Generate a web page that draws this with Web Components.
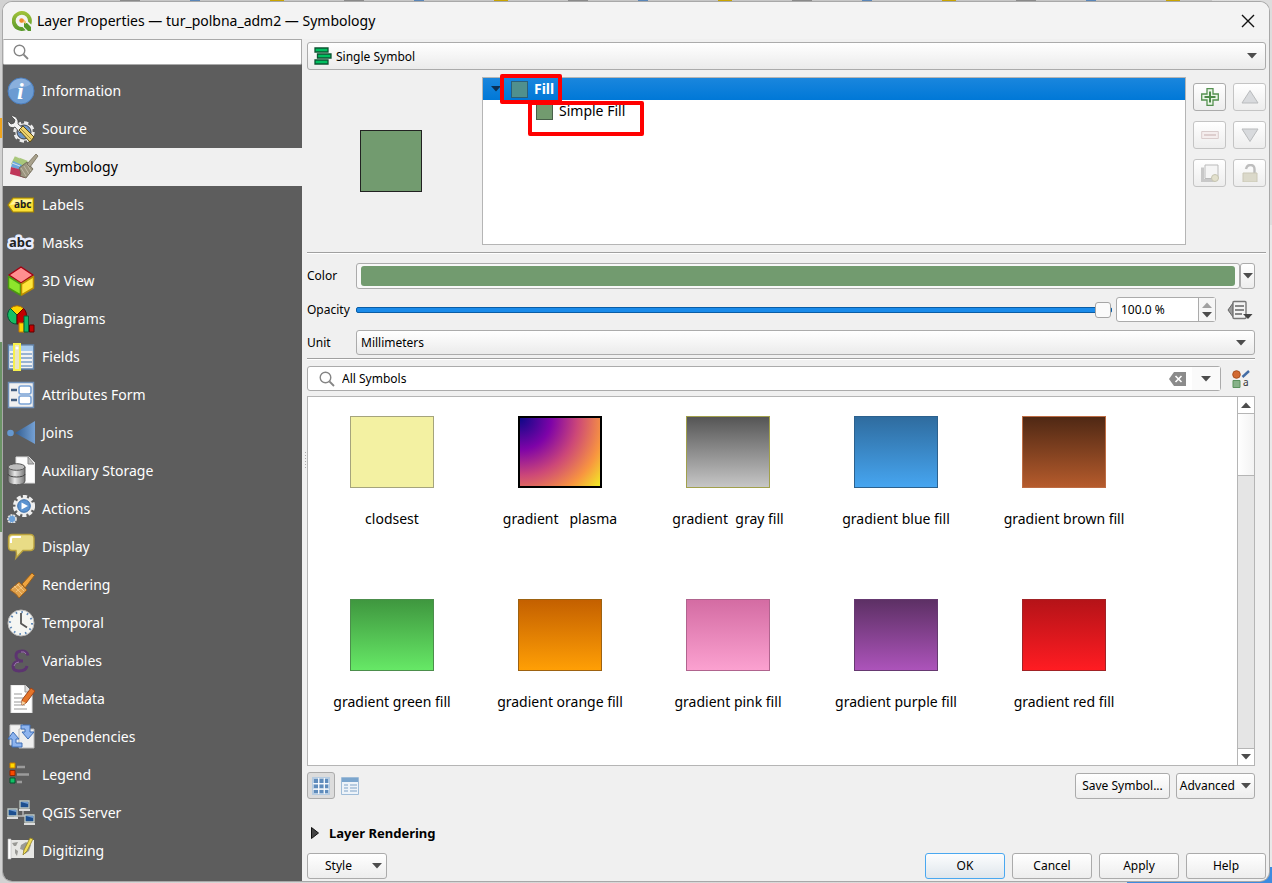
<!DOCTYPE html>
<html lang="en">
<head>
<meta charset="utf-8">
<title>Layer Properties</title>
<style>
html, body { margin: 0; }
body {
  min-height: 100vh;
  display: flex;
  box-sizing: border-box;
  padding: 2px 3px;
  background: #cfcfcf;
  font-family: "Noto Sans", "Open Sans", sans-serif;
  font-size: 14px;
  color: #000;
}
</style>
</head>
<body>
<desktop-backdrop></desktop-backdrop>
<layer-dialog></layer-dialog>

<script>
const ICONS = {
  qgis: ['0 0 20 20', '<defs><linearGradient id="q" x2="0" y2="1"><stop stop-color="#a3c33b"/><stop offset="1" stop-color="#57982a"/></linearGradient></defs><path fill="url(#q)" d="M10 0a10 10 0 1 0 3.700 19.200L10.500 16A6.200 6.200 0 1 1 16 10.400l3.200 3.200A10 10 0 0 0 10 0z"/><path fill="#57982a" d="M12 12h3l4 4v4h-3l-4-4z"/><path fill="#f6c37c" d="M8 8h3.500l2.500 2.500V13l-2.500-1.500H9z"/><circle cx="9.500" cy="9.500" r="2.200" fill="#ef8a2c"/>'],
  close: ['0 0 14 14', '<path d="M1 1l12 12M13 1L1 13" stroke="#111" stroke-width="1.400" fill="none"/>'],
  search: ['0 0 16 16', '<circle cx="6.500" cy="6.500" r="5.300" fill="none" stroke="#858585" stroke-width="1.400"/><path d="M10.500 10.500l4.500 4.500" stroke="#858585" stroke-width="1.800"/>'],
  down: ['0 0 10 6', '<path d="M0 0h10L5 5.500z" fill="#4d4d4d"/>'],
  expanded: ['0 0 10 6', '<path d="M0 0h10L5 5.500z" fill="#0b2e52"/>'],
  up: ['0 0 10 6', '<path d="M0 6h10L5 .5z" fill="#4d4d4d"/>'],
  upgrey: ['0 0 10 6', '<path d="M0 6h10L5 .5z" fill="#a0a0a0"/>'],
  right: ['0 0 8 12', '<path d="M.5 .5L7.500 6 .5 11.500z" fill="#444" stroke="#111"/>'],
  single: ['0 0 18 18', '<g fill="#00c060" stroke="#0c5432" stroke-width="1.300"><path d="M1 1h13v4H1zM3.500 7H17v4H3.500zM1 13h13v4H1z"/></g>'],
  information: ['0 0 28 28', '<circle cx="14" cy="14" r="13" fill="#6b9bd2" stroke="#4d7fbe"/><path d="M2 13a12 12 0 0 1 22-6C18 12 11 9 2 13z" fill="#a9c6e8" opacity=".5"/><text x="10" y="22" font-family="Liberation Serif" font-size="24" font-weight="bold" font-style="italic" fill="#fff">i</text>'],
  source: ['0 0 28 28', '<circle cx="17" cy="17" r="8.700" fill="#ececec" stroke="#ececec" stroke-width="4" stroke-dasharray="4 2.800"/><circle cx="17" cy="17" r="7" fill="#6c95c9" stroke="#444"/><path d="M4 1l4 4-1 3-3 1-3-3c-1 5 3 8 7 6l5 6 4-4-6-5c1-5-3-9-7-8z" fill="#f3f3f3" stroke="#444" stroke-width=".8"/><path d="M12 15l4-4 11 11-4 5z" fill="#efd36c" stroke="#5b4a15"/><path d="M14 14l10 10" stroke="#a48b3a"/>'],
  symbology: ['0 0 30 28', '<path d="M6 3l13 5-8 8-9-5z" fill="#a9c77b"/><path d="M4 8l9 4v6l-11-4z" fill="#6ba7dc"/><path d="M2 14l11 3 3 8-15-4z" fill="#bf3659"/><path d="M6 3l5 2M3 10l8 3" stroke="#eee" stroke-width=".8"/><path d="M10 15l8-6 6 7-7 9-6-2c2-3 0-5-1-8z" fill="#9a947e" stroke="#665f4c" stroke-width=".8"/><path d="M12 15l5 8m-2-10l5 8m-2-10l4 7" stroke="#c6c1ae" stroke-width=".8"/><path d="M18 11L27 1l2 2-8 11z" fill="#a8a18c" stroke="#736c58" stroke-width=".8"/>'],
  labels: ['0 0 28 28', '<path d="M1 14l5-7h20.500v14H6z" fill="#fbe036" stroke="#a68500" stroke-width="1.200"/><path d="M3 14l4-5.500h18V11z" fill="#fff39a"/><text x="7" y="17" font-family="Noto Sans" font-weight="bold" font-size="10" fill="#222">abc</text>'],
  masks: ['0 0 28 28', '<text x="2" y="18" font-family="Noto Sans" font-weight="bold" font-size="13" stroke="#e8edff" stroke-width="5" stroke-linejoin="round" fill="#222" paint-order="stroke">abc</text>'],
  view3d: ['0 0 28 30', '<g stroke-width="1.500" stroke-linejoin="round"><path d="M14 1l12 8-12 8L2 9z" fill="#ff8f8f" stroke="#a50010"/><path d="M1.500 10.500L13.500 18v11l-12-7z" fill="#8ee52c" stroke="#4a9a10"/><path d="M26.500 10.500l-12 7.500v11l12-7z" fill="#ffe53b" stroke="#bb8d00"/></g>'],
  diagrams: ['0 0 28 28', '<path d="M10 10L3.500 3.500a9 9 0 0 1 13 0z" fill="#ffd400" stroke="#b06a00"/><path d="M10 10L3.500 3.500A9 9 0 0 0 10 19z" fill="#16bf64" stroke="#053"/><path d="M10 10l6.500-6.500A9 9 0 0 1 10 19z" fill="#c40000" stroke="#600"/><path d="M12 18h5v9h-5z" fill="#ffd400" stroke="#c67b00"/><path d="M17 11h4.500v16H17z" fill="#10b867" stroke="#075c35"/><path d="M22.500 20H27v7h-4.500z" fill="#c40000" stroke="#610000"/>'],
  fields: ['0 0 28 28', '<path d="M1.500 2h25v24h-25z" fill="#f2f2f2" stroke="#6083ab" stroke-width="1.500"/><path d="M2 3h24v5H2z" fill="#a9cbed"/><path d="M3 11h22M3 15h22M3 19h22M3 23h22" stroke="#7b9fc7" stroke-width="1.300"/><path d="M7 1h6v26H7z" fill="#e9e5c4" stroke="#f7f04d" stroke-width="2"/><circle cx="10" cy="5" r="1.500" fill="#fff"/>'],
  form: ['0 0 28 28', '<path d="M1.500 1.500h25v25h-25z" fill="#f0f0f0" stroke="#7090b8" stroke-width="1.500"/><path d="M4 9h6M4 19h6" stroke="#435e80" stroke-width="2.400"/><rect x="12" y="5" width="12" height="8" rx="2" fill="#fff" stroke="#7aa3d6" stroke-width="1.600"/><rect x="12" y="15" width="12" height="8" rx="2" fill="#fff" stroke="#7aa3d6" stroke-width="1.600"/>'],
  joins: ['0 0 28 28', '<defs><linearGradient id="j"><stop stop-color="#315d91"/><stop offset="1" stop-color="#75a1d4"/></linearGradient></defs><circle cx="3.500" cy="14" r="3.300" fill="#6699d1"/><path d="M8 14L28 2v23z" fill="url(#j)"/>'],
  storage: ['0 0 28 30', '<defs><linearGradient id="s"><stop stop-color="#777"/><stop offset=".4" stop-color="#e8e8e8"/><stop offset="1" stop-color="#777"/></linearGradient></defs><path d="M9 1h13l6 6v20H9z" fill="#fdfdfd" stroke="#ddd"/><path d="M21 1l6 7h-6z" fill="#bbb" stroke="#888"/><path d="M1 11v14c0 5 17 5 17 0V11z" fill="url(#s)" stroke="#555"/><ellipse cx="9.500" cy="11" rx="8.500" ry="3.300" fill="#bdbdbd" stroke="#555"/><path d="M1 18c0 4 17 4 17 0" fill="none" stroke="#444"/>'],
  actions: ['0 0 28 28', '<circle cx="17" cy="11" r="9.200" fill="#777" stroke="#eee" stroke-width="3.800" stroke-dasharray="4 2"/><circle cx="17" cy="11" r="8.500" fill="#eee"/><circle cx="17" cy="11" r="6.300" fill="#5c93d0" stroke="#3c6fa9"/><path d="M14.500 7.500l6.500 3.500-6.500 3.500z" fill="#fff"/><circle cx="5" cy="24" r="4" fill="#6ba0d8" stroke="#ddd" stroke-width="1.800" stroke-dasharray="2 .8"/>'],
  display: ['0 0 28 28', '<path d="M5 1.500h18q4 0 4 4v8q0 4-4 4h-7L9 25q1-4 0-7.500H5q-3.500 0-3.500-4v-8q0-4 3.500-4z" fill="#e9dc86" stroke="#b9a13e" stroke-width="1.400"/><path d="M4 10V6q0-2 2-2h8" fill="none" stroke="#fff" stroke-width="2"/>'],
  rendering: ['0 0 28 28', '<path d="M15 13L25 2l2.500 2.500L18 17z" fill="#eea33f" stroke="#965e19"/><path d="M12 11l8 8-8 8q-2-4-9-8z" fill="#e0a04a" stroke="#a1631e"/><path d="M7 15l8 8M10 13l7 7M5 18l7-5M9 21l7-6" stroke="#f6cd8d" stroke-width=".8"/>'],
  temporal: ['0 0 28 28', '<circle cx="14" cy="14" r="13" fill="#f5f6f3" stroke="#bbb"/><circle cx="14" cy="14" r="11" fill="none" stroke="#5e87b5" stroke-width="2" stroke-dasharray="1.600 4.160"/><path d="M14 4v10.500l6 4" fill="none" stroke="#555" stroke-width="1.800"/>'],
  variables: ['0 0 28 28', '<path d="M21 8.500Q20 4 15 4 9 4 9 8.500T14 14q-7 0-8 5 0 5 6 5 7 0 8-5M12 14h4" fill="none" stroke="#5c3470" stroke-width="3"/><path d="M19 7q-1-3-5-2M7 19q1-4 5-4" fill="none" stroke="#9a76aa"/>'],
  metadata: ['0 0 28 28', '<path d="M4 0h14l7 7v21H4z" fill="#fff" stroke="#ddd"/><path d="M18 0v7h7" fill="#ddd" stroke="#999"/><path d="M7 9h8M7 13h10M7 17h8M7 20h11M7 24h13" stroke="#999" stroke-width="1.200"/><path d="M24 3l4 3-9 12-4 2v-5z" fill="#e57429" stroke="#9e4518"/><path d="M15 16v4l4-2z" fill="#f4d2a0"/>'],
  dependencies: ['0 0 28 28', '<path d="M3 2h13v20H3z" fill="#f1f1f1" stroke="#ccc"/><path d="M12 6h15v19H12z" fill="#eee" stroke="#bbb"/><path d="M14 2h9v7h4l-6 7-6-7h3V6h-4z" fill="#8eb4ee" stroke="#3f6eb6"/><path d="M15 24H5v-8H1l5-7 6 7H9v4h6z" fill="#8eb4ee" stroke="#3f6eb6"/>'],
  legend: ['0 0 28 28', '<path d="M3 2h5v5H3z" fill="#ffd900" stroke="#c77b00"/><path d="M3 9.500h5v5H3z" fill="#fb4a00" stroke="#922600"/><path d="M3 17h5v5H3z" fill="#10bf65" stroke="#03542c"/><path d="M10 6h8M10 13.500h12M10 21h5" stroke="#9b9b9b" stroke-width="2.500"/>'],
  server: ['0 0 28 28', '<path d="M16 10v7H7m9 0h8v4" fill="none" stroke="#bbb" stroke-width="1.400"/><g fill="#1d4f8f" stroke="#bfc9c4" stroke-width="1.300"><path d="M13 2h9v7h-9zM1 10h9v7H1zM18 16h9v7h-9z"/></g><path d="M12 11h11M0 19h11M17 25h11" stroke="#ddd" stroke-width="2"/><path d="M14 3h7v2zM2 11h7v2zM19 17h7v2z" fill="#6f9bd0"/>'],
  digitizing: ['0 0 28 28', '<path d="M1 3h26v18H1z" fill="#e7e7e4"/><path d="M1 2h3v20H1z" fill="#fff" stroke="#bbb" stroke-width=".6"/><path d="M5 6l6-1-2 4-2 0zM8 12l3 2-1 5-2-3zM14 8l5-3 5 3-2 6-4 3-2-4-3-1z" fill="#9a9a96"/><path d="M23 1l3 1-6 12-4 4 1-5z" fill="#f2df59" stroke="#8f7f23" stroke-width=".8"/>'],
  plus: ['0 0 18 18', '<path d="M6 .7h6V6h5.300v6H12v5.300H6V12H.7V6H6z" fill="#eaf5e7" stroke="#549150" stroke-width="1.300"/><path d="M9 3.500v11M3.500 9h11" stroke="#4c8b48" stroke-width="2"/>'],
  minus: ['0 0 18 18', '<path d="M.7 5.500h16.600v7H.7z" fill="#f4eded" stroke="#d9cccc"/><path d="M3 9h12" stroke="#ddcece" stroke-width="2"/>'],
  moveup: ['0 0 18 18', '<path d="M9 2.500l8 12.500H1z" fill="#d8dadd" stroke="#b9bbbd"/>'],
  movedown: ['0 0 18 18', '<path d="M9 15.500l8-12.500H1z" fill="#d8dadd" stroke="#b9bbbd"/>'],
  duplicate: ['0 0 18 18', '<path d="M1.500 3.500v13H14" fill="none" stroke="#c8c8c8" stroke-width="3"/><path d="M4 1h13v13.500H4z" fill="#f5f5f5" stroke="#bbb"/><circle cx="14" cy="14" r="3.500" fill="#e2e0cc" stroke="#c5c3b0"/>'],
  lock: ['0 0 18 18', '<path d="M5 5Q6 1 9.500 1q4 0 4 4v4" fill="none" stroke="#bdbdbd" stroke-width="2.400"/><path d="M2 9h14v9H2z" fill="#dbd9ca" stroke="#cbc8b7"/>'],
  override: ['0 0 26 20', '<path d="M6 3v14L1 10z" fill="#999" stroke="#666"/><rect x="6" y="1.500" width="13" height="17" rx="1" fill="#f3f3f3" stroke="#777" stroke-width="1.400"/><path d="M8 6h9M8 10h9M8 14h7" stroke="#666" stroke-width="1.500"/><path d="M16 14h9.500L21 19z" fill="#444"/>'],
  clear: ['0 0 17 14', '<path d="M5 0h12v14H5L0 7z" fill="#8b8b8b"/><path d="M6.500 4l6 6m0-6l-6 6" stroke="#fff" stroke-width="1.600"/>'],
  style: ['0 0 18 20', '<circle cx="4.500" cy="5.500" r="3.800" fill="#d26a33" stroke="#a9501f"/><path d="M10.500 8L17 2" stroke="#426ca5" stroke-width="2.400"/><path d="M1 11.500h7v7H1z" fill="#87b289" stroke="#5c925f"/><text x="11" y="17" font-family="Noto Sans" font-size="10" fill="#333">a</text>'],
  grid: ['0 0 18 18', '<path d="M0 0h18v18H0z" fill="#b5cbe1"/><g fill="#5f8cbc"><path d="M2 2h4v4H2zM7.500 2h4v4h-4zM13 2h3v4h-3zM2 7.500h4v3.500H2zM7.500 7.500h4v3.500h-4zM13 7.500h3v3.500h-3zM2 13h4v3H2zM7.500 13h4v3h-4zM13 13h3v3h-3z"/></g><path d="M6.700 1v16M12.300 1v16M1 6.700h16M1 12.200h16" stroke="#fff"/>'],
  list: ['0 0 18 18', '<path d="M.5 .5h17v17H.5z" fill="#edf3f9" stroke="#9fbcd8"/><path d="M1 1h16v4H1z" fill="#7ba5cd"/><path d="M3 8h4M3 11h4M3 14h4M9 8h7M9 11h7M9 14h7" stroke="#80a4c8" stroke-width="1.200"/>']
};

function define(name, html, setup) {
  const t = document.createElement('template');
  t.innerHTML = html;
  customElements.define(name, class extends HTMLElement {
    constructor() {
      super();
      this.attachShadow({ mode: 'open' }).appendChild(t.content.cloneNode(true));
    }
    connectedCallback() {
      if (setup && !this.ready) { this.ready = true; setup(this, this.shadowRoot); }
    }
  });
}

define('ui-icon', '<style>:host{display:inline-flex;flex:none;pointer-events:none}svg{display:block}</style>', (el, root) => {
  const [box, body] = ICONS[el.getAttribute('name')];
  const [, , w, h] = box.split(' ');
  root.innerHTML += `<svg width="${w}" height="${h}" viewBox="${box}" aria-hidden="true">${body}</svg>`;
});

/* Edges of the application windows that stay visible around the dialog. */
define('desktop-backdrop', `<style>
:host{position:absolute;inset:0;z-index:-1;overflow:hidden;
background:linear-gradient(90deg,#f1a51d 0 0) 0 118px/4px 20px no-repeat,linear-gradient(#6b9466,#6b9466) 0 342px/4px 190px no-repeat,linear-gradient(90deg,#d2d2d2,#ddd)}
i{display:block;position:absolute}
.strip{top:0;left:60px;right:60px;height:2px;background:repeating-linear-gradient(90deg,#c6c6c6 0 60px,#8a8a8a 60px 80px,#c6c6c6 80px 130px,#5a86b8 130px 140px,#c6c6c6 140px 210px,#c9a400 210px 224px)}
.foot{right:0;bottom:0;width:145px;height:16px;background:#3d8be0}
.edge{right:0;top:225px;width:3px;bottom:16px;background:#e9e9e9}
</style><i class="strip"></i><i class="edge"></i><i class="foot"></i>`);

define('title-bar', `<style>
:host{display:flex;align-items:center;height:37px;padding:0 14px 0 9px;gap:5px;background:#f3f3f3}
h1{margin:0;flex:1;font:inherit;line-height:20px}
button{all:unset;display:flex}
</style><ui-icon name="qgis"></ui-icon><h1><slot></slot></h1><button aria-label="Close"><ui-icon name="close"></ui-icon></button>`);

define('nav-item', `<style>
:host{display:block}
button{all:unset;box-sizing:border-box;width:100%;height:38px;display:flex;align-items:center;gap:7px;padding-left:4px;color:#fff;line-height:20px}
.pic{width:28px;display:flex;justify-content:center}
:host([selected]) button{background:#f0f0f0;color:#000}
:host([selected]) .pic{width:30px;padding-left:2px}
:host([selected]) button{gap:6px}
</style><button><span class="pic"></span><slot></slot></button>`, (el, root) => {
  root.querySelector('.pic').innerHTML = `<ui-icon name="${el.getAttribute('icon')}"></ui-icon>`;
});

define('side-nav', `<style>
:host{display:flex;flex-direction:column;width:299px;flex:none;background:#5d5d5d}
label{display:flex;align-items:center;gap:6px;height:24px;padding:0 9px;border:1px solid #aaa;border-left-color:#ddd;border-radius:0 0 2px 2px;background:#fff}
input{all:unset;flex:1;min-width:0;font-size:13px}
nav{padding-top:7px}
</style><label><ui-icon name="search"></ui-icon><input type="text" aria-label="Search options"></label><nav><slot></slot></nav>`);

define('ui-button', `<style>
:host{display:inline-flex;flex:none}
button{font:inherit;color:inherit;box-sizing:border-box;height:26px;width:100%;padding:0 3px;margin:0;display:flex;align-items:center;justify-content:center;gap:6px;white-space:nowrap;
border:1px solid #ababab;border-radius:3px;background:linear-gradient(#fff,#ededed)}
:host([primary]) button{border-color:#4aa8f0;background:linear-gradient(#fcfdfe,#dfe6ec)}
:host([square]) button{width:33px;height:28px;padding:0}
:host([toggled]) button{width:28px;height:27px;padding:0;background:#dcdcdc}
:host([flat]) button{border:0;background:none;padding:0}
:host([wide]){width:80px}
:host([roomy]) button{padding:0 6px}
:host([menu]) button{justify-content:space-between;padding:0 4px 0 17px}
:host([disabled]) button{border-color:#c4c4c4}
</style><button><slot></slot></button>`, (el, root) => {
  const b = root.querySelector('button');
  if (el.hasAttribute('label')) b.setAttribute('aria-label', el.getAttribute('label'));
  b.disabled = el.hasAttribute('disabled');
});

define('combo-box', `<style>
:host{display:grid;flex:1;min-width:0;align-items:center}
select{grid-area:1/1;appearance:none;font:inherit;color:inherit;box-sizing:border-box;width:100%;height:25px;margin:0;padding:0 24px 0 4px;border:1px solid #ababab;border-radius:3px;background:linear-gradient(#fff,#ebebeb)}
:host([icon]) select{height:28px;padding:1px 24px 0 28px}
.arrow{grid-area:1/1;justify-self:end;margin-right:9px}
.lead{grid-area:1/1;justify-self:start;display:flex;margin-left:7px;pointer-events:none}
</style><select><option></option></select><span class="lead"></span><ui-icon class="arrow" name="down"></ui-icon>`, (el, root) => {
  root.querySelector('option').textContent = el.getAttribute('value');
  root.querySelector('select').setAttribute('aria-label', el.getAttribute('label'));
  if (el.hasAttribute('icon')) root.querySelector('.lead').innerHTML = `<ui-icon name="${el.getAttribute('icon')}"></ui-icon>`;
});

define('symbol-tree', `<style>
:host{display:block;position:relative;flex:1;box-sizing:border-box;height:168px;border:1px solid #b5b5b5;background:#fff;font-size:14px;line-height:22px}
ul{list-style:none;margin:0;padding:0}
.row{display:flex;align-items:center;height:22px;gap:6px}
.top{background:linear-gradient(#1a86dd,#0078d7);color:#fff;font-weight:bold;line-height:24px;padding-left:8px}
.top ui-icon{margin-right:4px}
.child{padding-left:53px}
.sw{width:15px;height:15px;border:1px solid #48604a;background:#729b6f}
.top .sw{background:#50908d;border-color:#2c5f78}
.mark{position:absolute;box-sizing:border-box;border:4px solid #f00;border-radius:2px}
.a{left:17px;top:-4px;width:62px;height:30px}
.b{left:45px;top:23px;width:116px;height:35px}
</style><ul role="tree"><li role="treeitem"><div class="row top"><ui-icon name="expanded"></ui-icon><span class="sw"></span>Fill</div>
<ul role="group"><li role="treeitem"><div class="row child"><span class="sw"></span>Simple Fill</div></li></ul></li></ul><div class="mark a"></div><div class="mark b"></div>`);

define('symbol-panel', `<style>
:host{display:flex;gap:7px}
.preview{width:168px;display:flex;align-items:center;justify-content:center}
.preview span{width:60px;height:60px;border:1px solid #222;background:#729b6f}
.tools{display:grid;grid-template-columns:33px 33px;gap:10px 7px;align-content:start;padding-top:6px}
</style><div class="preview"><span></span></div><symbol-tree></symbol-tree><div class="tools">
<ui-button square label="Add symbol layer"><ui-icon name="plus"></ui-icon></ui-button>
<ui-button square disabled label="Move up"><ui-icon name="moveup"></ui-icon></ui-button>
<ui-button square disabled label="Remove symbol layer"><ui-icon name="minus"></ui-icon></ui-button>
<ui-button square disabled label="Move down"><ui-icon name="movedown"></ui-icon></ui-button>
<ui-button square disabled label="Duplicate"><ui-icon name="duplicate"></ui-icon></ui-button>
<ui-button square disabled label="Lock colors"><ui-icon name="lock"></ui-icon></ui-button></div>`);

define('symbol-form', `<style>
:host{display:grid;grid-template-columns:49px 1fr;row-gap:8px;align-items:center;padding-right:11px}
.line{display:flex;align-items:center;min-width:0}
.color{flex:1;height:26px;box-sizing:border-box;padding:2px 4px;border:1px solid #ababab;border-radius:3px;background:#f8f8f8}
.color::before{content:"";display:block;height:20px;border-radius:3px;background:#729b6f}
.drop{width:15px}
input[type=range]{appearance:none;flex:1;min-width:0;height:18px;margin:0 4px 0 0;background:none}
input[type=range]::-webkit-slider-runnable-track{height:6px;box-sizing:border-box;border:1px solid #0a5da5;border-radius:2px;background:#1a8bea}
input[type=range]::-webkit-slider-thumb{appearance:none;box-sizing:border-box;width:16px;height:16px;margin-top:-6px;border:1px solid #a5a5a5;border-radius:3px;background:#fafafa}
.spin{display:flex;box-sizing:border-box;width:100px;height:25px;border:1px solid #ababab;border-radius:3px;background:#fff;margin-right:11px}
.spin input{all:unset;flex:1;min-width:0;padding-left:4px}
.spin span{width:16px;border-left:1px solid #ababab;display:flex;flex-direction:column;align-items:center;justify-content:center;gap:4px;background:#f6f6f6}
.over{margin-right:2px}
</style>
<label for="c">Color</label><div class="line"><button id="c" class="color" aria-label="Color"></button><ui-button class="drop" label="Color menu"><ui-icon name="down"></ui-icon></ui-button></div>
<label for="o">Opacity</label><div class="line"><input id="o" type="range" value="100"><div class="spin"><input type="text" value="100.0 %" aria-label="Opacity percent"><span><ui-icon name="upgrey"></ui-icon><ui-icon name="down"></ui-icon></span></div><ui-icon class="over" name="override"></ui-icon></div>
<span>Unit</span><combo-box label="Unit" value="Millimeters"></combo-box>`);

define('symbol-filter', `<style>
:host{display:flex;align-items:center;gap:11px;padding-right:16px}
.box{flex:1;display:flex;align-items:center;box-sizing:border-box;height:25px;padding-left:11px;border:1px solid #ababab;border-radius:3px;background:#fff}
input{all:unset;flex:1;min-width:0;padding-left:7px}
.arrow{width:28px;height:23px;margin-left:6px;display:flex;align-items:center;justify-content:center;background:#fafafa}
</style><div class="box"><ui-icon name="search"></ui-icon><input type="text" value="All Symbols" aria-label="Symbol filter"><ui-icon name="clear"></ui-icon><span class="arrow"><ui-icon name="down"></ui-icon></span></div><ui-icon name="style"></ui-icon>`);

define('symbol-tile', `<style>
:host{display:block;height:183px}
button{all:unset;display:flex;flex-direction:column;align-items:center;width:100%;font-size:14px;line-height:20px;white-space:pre}
span{box-sizing:border-box;width:84px;height:72px;margin:19px 0 21px;border:1px solid var(--edge);background:var(--paint)}
:host([bold]) span{border-width:2px}
</style><button><span></span><slot></slot></button>`);

define('symbol-list', `<style>
:host{display:flex;flex:1;min-height:0;box-sizing:border-box;margin-right:11px;border:1px solid #b5b5b5;background:#fff}
.grid{flex:1;display:grid;grid-template-columns:repeat(auto-fill,168px);align-content:start;overflow:hidden}
.bar{width:16px;display:flex;flex-direction:column;border-left:1px solid #b5b5b5;background:#e5e5e5}
.bar div{height:16px;display:flex;align-items:center;justify-content:center;background:#fff}
.bar .thumb{height:61px;border:solid #b5b5b5;border-width:1px 0;background:linear-gradient(90deg,#fff,#f3f3f3)}
.bar .end{margin-top:auto;border-top:1px solid #b5b5b5}
</style><div class="grid"><slot></slot></div><div class="bar"><div><ui-icon name="up"></ui-icon></div><div class="thumb"></div><div class="end"><ui-icon name="down"></ui-icon></div></div>`);

define('layer-dialog', `<style>
:host{flex:1;min-width:0;display:flex;flex-direction:column;overflow:hidden;border-radius:9px;background:#f0f0f0;box-shadow:0 0 0 1px #a8a8a8}
.body{flex:1;display:flex;min-height:0}
main{flex:1;min-width:0;display:flex;flex-direction:column;padding:3px 3px 2px 0;font-size:12px;line-height:18px}
.split{width:5px;flex:none;display:flex;align-items:center}
.split::before{content:"";width:1px;height:17px;margin-left:3px;background:repeating-linear-gradient(#aaa 0 1px,transparent 1px 3px)}
hr{width:100%;height:1px;margin:7px 0 9px;border:0;background:#a0a0a0;border-bottom:1px solid #fff;flex:none}
hr.near{margin:3px 11px 6px 0;width:auto}
.tree{margin-top:7px}
symbol-list{margin-top:5px}
.row{display:flex;align-items:center;gap:6px}
.under{padding:6px 11px 0 0}
.actions{gap:7px}
.grow{flex:1}
h2{display:flex;align-items:center;gap:10px;margin:24px 0 10px 4px;font-size:13px;line-height:20px}
</style>
<title-bar>Layer Properties — tur_polbna_adm2 — Symbology</title-bar>
<div class="body">
<side-nav>
<nav-item icon="information">Information</nav-item><nav-item icon="source">Source</nav-item>
<nav-item icon="symbology" selected>Symbology</nav-item><nav-item icon="labels">Labels</nav-item>
<nav-item icon="masks">Masks</nav-item><nav-item icon="view3d">3D View</nav-item>
<nav-item icon="diagrams">Diagrams</nav-item><nav-item icon="fields">Fields</nav-item>
<nav-item icon="form">Attributes Form</nav-item><nav-item icon="joins">Joins</nav-item>
<nav-item icon="storage">Auxiliary Storage</nav-item><nav-item icon="actions">Actions</nav-item>
<nav-item icon="display">Display</nav-item><nav-item icon="rendering">Rendering</nav-item>
<nav-item icon="temporal">Temporal</nav-item><nav-item icon="variables">Variables</nav-item>
<nav-item icon="metadata">Metadata</nav-item><nav-item icon="dependencies">Dependencies</nav-item>
<nav-item icon="legend">Legend</nav-item><nav-item icon="server">QGIS Server</nav-item>
<nav-item icon="digitizing">Digitizing</nav-item>
</side-nav>
<div class="split"></div>
<main>
<div class="row"><combo-box icon="single" label="Renderer" value="Single Symbol"></combo-box></div>
<symbol-panel class="tree"></symbol-panel>
<hr>
<symbol-form></symbol-form>
<hr class="near">
<symbol-filter></symbol-filter>
<symbol-list>
<symbol-tile style="--paint:#f3f1a2;--edge:#a5a47c">clodsest</symbol-tile>
<symbol-tile bold style="--paint:radial-gradient(circle at 0 0,#0d0887,#7e03a8 30%,#cc4778 55%,#f89540 80%,#f0f921 108px);--edge:#000">gradient   plasma</symbol-tile>
<symbol-tile style="--paint:linear-gradient(#555,#c6c6c6);--edge:#a1a04c">gradient  gray fill</symbol-tile>
<symbol-tile style="--paint:linear-gradient(#2f6c9f,#46a5f0);--edge:#2c618e">gradient blue fill</symbol-tile>
<symbol-tile style="--paint:linear-gradient(#4f2814,#b55b2c);--edge:#bd6c43">gradient brown fill</symbol-tile>
<symbol-tile style="--paint:linear-gradient(#3f973f,#66e866);--edge:#4c8e4c">gradient green fill</symbol-tile>
<symbol-tile style="--paint:linear-gradient(#c46000,#ff9f05);--edge:#9d6211">gradient orange fill</symbol-tile>
<symbol-tile style="--paint:linear-gradient(#d46ca3,#fba1d0);--edge:#b0648e">gradient pink fill</symbol-tile>
<symbol-tile style="--paint:linear-gradient(#5d3065,#ac53ba);--edge:#663971">gradient purple fill</symbol-tile>
<symbol-tile style="--paint:linear-gradient(#b51318,#ff1c22);--edge:#a12225">gradient red fill</symbol-tile>
</symbol-list>
<div class="row under"><ui-button toggled label="Icon view"><ui-icon name="grid"></ui-icon></ui-button><ui-button flat label="List view"><ui-icon name="list"></ui-icon></ui-button><span class="grow"></span><ui-button roomy>Save Symbol...</ui-button><ui-button>Advanced<ui-icon name="down"></ui-icon></ui-button></div>
<h2><ui-icon name="right"></ui-icon>Layer Rendering</h2>
<div class="row actions"><ui-button wide menu>Style<ui-icon name="down"></ui-icon></ui-button><span class="grow"></span><ui-button wide primary>OK</ui-button><ui-button wide>Cancel</ui-button><ui-button wide>Apply</ui-button><ui-button wide>Help</ui-button></div>
</main>
</div>`);
</script>
</body>
</html>
